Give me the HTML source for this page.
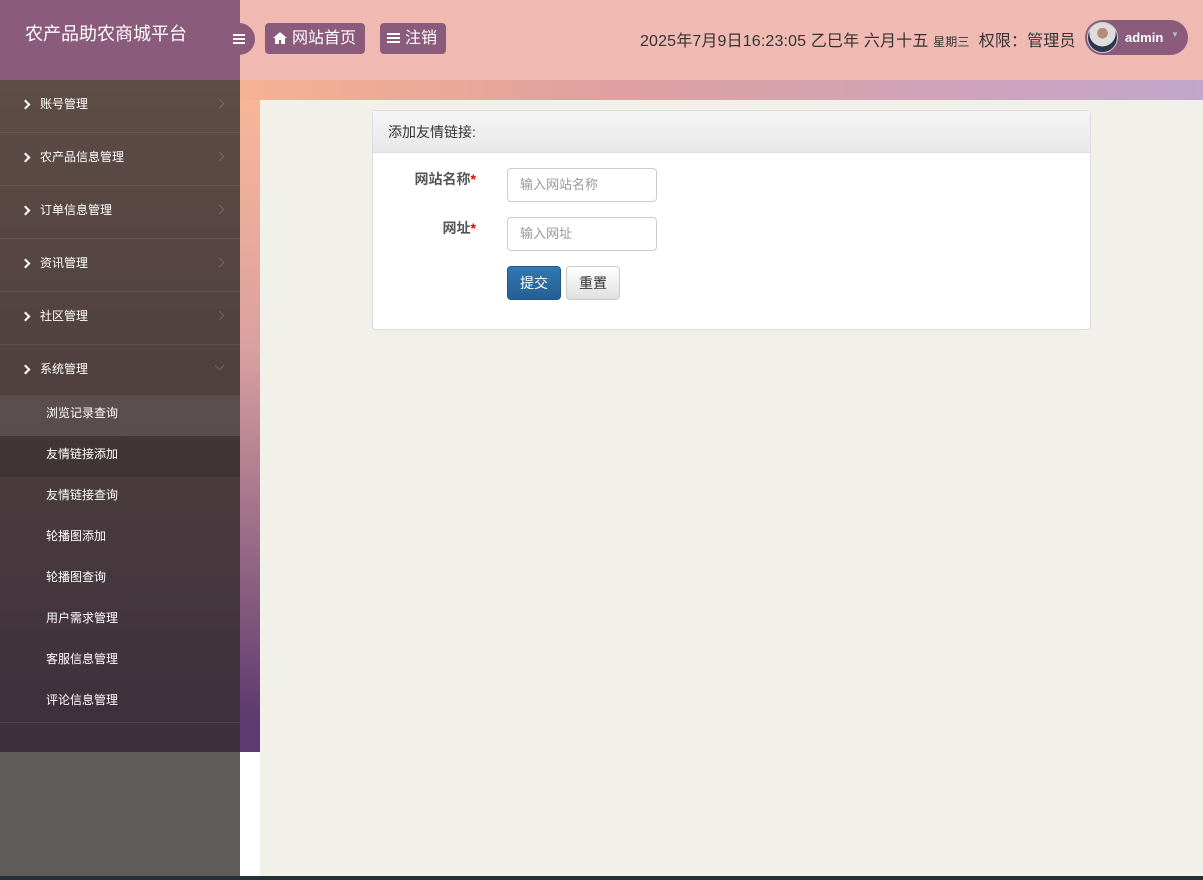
<!DOCTYPE html><html><head><meta charset="utf-8"><style>
*{margin:0;padding:0;box-sizing:border-box}
body{width:1203px;height:880px;overflow:hidden;position:relative;font-family:"Liberation Sans","Noto Sans CJK SC",sans-serif;background:#f1f0e9}
.hdr{position:absolute;left:0;top:0;width:1203px;height:80px;background:#f0bab2}
.logo{position:absolute;left:0;top:0;width:240px;height:80px;background:#8b5b7c;color:#fff;font-size:18px;padding:20px 0 0 25px}
.tog{position:absolute;left:222px;top:23px;width:33px;height:32px;border-radius:0 16px 16px 0;background:#8b5b7c}
.bars{position:absolute;width:12px;height:10px;border-top:2px solid #fff;border-bottom:2px solid #fff}
.bars:after{content:"";position:absolute;left:0;right:0;top:2px;height:2px;background:#fff}
.btn{position:absolute;top:23px;height:31px;background:#8b5b7c;border-radius:4px;color:#fff;font-size:16px;line-height:31px}
.info{position:absolute;left:640px;top:27px;font-size:16px;color:#333;letter-spacing:.15px}
.user{position:absolute;left:1085px;top:20px;width:103px;height:35px;border-radius:18px;background:#8b5b7c;color:#fff;font-size:13px;font-weight:bold}
.av{position:absolute;left:2px;top:2px;width:31px;height:31px;border-radius:50%;background:radial-gradient(circle at 50% 35%,#b88a78 0 22%,#ddd 23% 55%,#2e3550 56%);border:1px solid #ccc}
.strip{position:absolute;left:240px;top:80px;width:963px;height:20px;background:linear-gradient(90deg,#f6b292,#dea0a0 40%,#c2a4cc)}
.bgl{position:absolute;left:0;top:80px;width:260px;height:672px;background:linear-gradient(180deg,#fbb896,#dba0a0 40%,#5d3a6f 95%)}
.side{position:absolute;left:0;top:80px;width:240px;height:672px;background:linear-gradient(180deg,#5e4c46,#4f403f 45%,#3d2f3b)}
.gray{position:absolute;left:0;top:752px;width:240px;height:124px;background:#605c5a}
.wh{position:absolute;left:240px;top:752px;width:20px;height:124px;background:#fff}
.bot{position:absolute;left:0;top:876px;width:1203px;height:4px;background:#243238}
.mi{height:53px;border-bottom:1px solid rgba(255,255,255,.08);color:#fff;font-size:12px;line-height:48px;padding-left:40px;position:relative}
.mi:before{content:"";position:absolute;left:22px;top:21px;width:5px;height:5px;border-right:2px solid #fff;border-top:2px solid #fff;transform:rotate(45deg)}
.mi:after{content:"";position:absolute;right:17px;top:20px;width:6px;height:6px;border-right:1px solid rgba(255,255,255,.18);border-top:1px solid rgba(255,255,255,.18);transform:rotate(45deg)}
.mi.open:after{transform:rotate(135deg);top:17px}
.si{height:41px;line-height:37px;color:#fff;font-size:12px;padding-left:46px}
.card{position:absolute;left:372px;top:110px;width:719px;height:220px;background:#fff;border:1px solid #ddd;border-radius:4px}
.ch{height:42px;background:linear-gradient(#f5f5f5,#e8e8e8);border-bottom:1px solid #ddd;font-size:14px;color:#333;line-height:42px;padding-left:15px}
.lb{position:absolute;font-size:14px;font-weight:bold;color:#555;right:614px}
.lb b{color:#e00}
.in{position:absolute;left:134px;width:150px;height:34px;border:1px solid #ccc;border-radius:4px;font-size:13px;color:#999;line-height:32px;padding-left:12px}
.b1{position:absolute;left:134px;top:155px;width:54px;height:34px;border-radius:4px;background:linear-gradient(#3278b3,#245f93);color:#fff;font-size:14px;text-align:center;line-height:32px;border:1px solid #245580}
.b2{position:absolute;left:193px;top:155px;width:54px;height:34px;border-radius:4px;background:linear-gradient(#fff,#e0e0e0);color:#333;font-size:14px;text-align:center;line-height:32px;border:1px solid #ccc}
</style></head><body>
<div class="bgl"></div><div class="side">
<div class="mi">账号管理</div><div class="mi">农产品信息管理</div><div class="mi">订单信息管理</div><div class="mi">资讯管理</div><div class="mi">社区管理</div><div class="mi open" style="border:0;height:50px">系统管理</div>
<div class="si" style="background:rgba(255,255,255,.08)">浏览记录查询</div>
<div class="si" style="background:rgba(0,0,0,.12)">友情链接添加</div>
<div class="si">友情链接查询</div><div class="si">轮播图添加</div><div class="si">轮播图查询</div><div class="si">用户需求管理</div><div class="si">客服信息管理</div><div class="si" style="border-bottom:1px solid rgba(255,255,255,.08)">评论信息管理</div>
</div>
<div class="gray"></div><div class="wh"></div><div class="bot"></div>
<div class="strip"></div>
<div class="hdr"><div class="logo">农产品助农商城平台</div><div class="tog"><div class="bars" style="left:11px;top:11px"></div></div>
<div class="btn" style="left:265px;width:100px"><svg style="position:absolute;left:8px;top:9px" width="14" height="12" viewBox="0 0 14 12"><path d="M7 0L0 6h2v6h4V8h2v4h4V6h2z" fill="#fff"/></svg><span style="position:absolute;left:27px">网站首页</span></div>
<div class="btn" style="left:380px;width:66px"><div class="bars" style="left:7px;top:10px;width:13px"></div><span style="position:absolute;left:25px">注销</span></div>
<div class="info">2025年7月9日16:23:05 乙巳年 六月十五 <span style="font-size:12px">星期三</span>&nbsp; 权限：管理员</div>
<div class="user"><div class="av"></div><span style="position:absolute;left:40px;top:10px">admin</span><span style="position:absolute;left:86px;top:10px;color:#bbb;font-size:8px">▼</span></div></div>
<div class="card"><div class="ch">添加友情链接:</div>
<div class="lb" style="top:58px">网站名称<b>*</b></div><div class="in" style="top:57px">输入网站名称</div>
<div class="lb" style="top:107px">网址<b>*</b></div><div class="in" style="top:106px">输入网址</div>
<div class="b1">提交</div><div class="b2">重置</div></div>
</body></html>
